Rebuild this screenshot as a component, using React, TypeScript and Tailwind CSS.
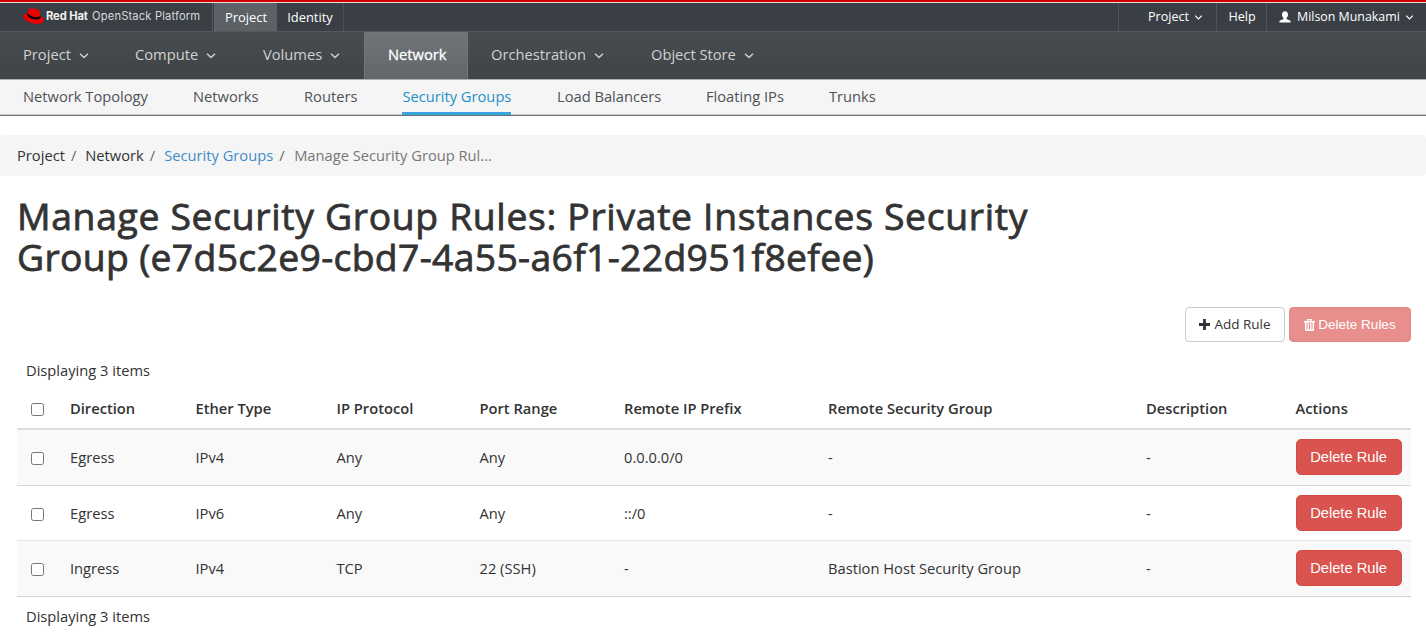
import React from "react";

const Chevron = ({ className = "" }: { className?: string }) => (
  <svg viewBox="0 0 10 6" className={"shrink-0 " + className} fill="none" stroke="currentColor" strokeWidth="1.4">
    <path d="M1 0.8 L5 4.6 L9 0.8" />
  </svg>
);

const Hat = () => (
  <svg viewBox="0 0 192 145" className="h-[16px] w-[21px] shrink-0">
    <path
      fill="#e00"
      d="M127.47 83.49c12.51 0 30.61-2.58 30.61-17.46a14 14 0 0 0-.31-3.42l-7.45-32.36c-1.72-7.12-3.23-10.35-15.73-16.6C124.89 8.69 103.76.5 97.51.5 91.69.5 90 8 83.06 8c-6.68 0-11.64-5.6-17.89-5.6-6 0-9.91 4.09-12.93 12.5 0 0-8.41 23.72-9.49 27.16A6.43 6.43 0 0 0 42.53 44c0 9.22 36.3 39.45 84.94 39.49M160 72.07c1.73 8.19 1.73 9.05 1.73 10.13 0 14-15.74 21.77-36.43 21.77C78.54 104 37.58 76.6 37.58 58.49a18.45 18.45 0 0 1 1.51-7.33C22.27 52 .5 55 .5 74.22c0 31.48 74.59 70.28 133.65 70.28 45.28 0 56.7-20.48 56.7-36.65 0-12.72-11-27.16-30.83-35.78"
    />
    <path
      fill="#150000"
      d="M160 72.07c1.73 8.19 1.73 9.05 1.73 10.13 0 14-15.74 21.77-36.43 21.77C78.54 104 37.58 76.6 37.58 58.49a18.45 18.45 0 0 1 1.51-7.33l3.66-9.06A6.43 6.43 0 0 0 42.53 44c0 9.22 36.3 39.45 84.94 39.45 12.51 0 30.61-2.58 30.61-17.46a14 14 0 0 0-.31-3.42z"
    />
  </svg>
);

const UserIcon = () => (
  <svg viewBox="0 0 12 12" className="h-[12px] w-[12px]" fill="#fff">
    <path d="M6 0.3C7.9 0.3 9 1.6 9 3.6C9 5 8.4 6.3 7.5 7V8L11 9.6Q11.6 9.9 11.6 10.6V11.5H0.4V10.6Q0.4 9.9 1 9.6L4.5 8V7C3.6 6.3 3 5 3 3.6C3 1.6 4.1 0.3 6 0.3Z" />
  </svg>
);

const TrashIcon = () => (
  <svg viewBox="0 0 11 12" className="mr-[3px] h-[12px] w-[11px]" fill="none" stroke="#fff">
    <path d="M0 2.7H11" strokeWidth="1.6" />
    <path d="M3.6 2V0.6H7.4V2" strokeWidth="1.1" />
    <path d="M1.7 3V10.4Q1.7 11.3 2.6 11.3H8.4Q9.3 11.3 9.3 10.4V3" strokeWidth="1.5" />
    <path d="M4.2 3.5V11M6.8 3.5V11" strokeWidth="1.3" />
  </svg>
);

const mainNav = [
  { label: "Project", width: "w-[112px]" },
  { label: "Compute", width: "w-[128px]" },
  { label: "Volumes", width: "w-[124px]" },
  { label: "Network", width: "w-[104px]", active: true },
  { label: "Orchestration", width: "w-[160px]" },
  { label: "Object Store", width: "w-[160px]" },
];

const subNav = [
  { label: "Network Topology", width: "w-[170px]" },
  { label: "Networks", width: "w-[111px]" },
  { label: "Routers", width: "w-[98.4px]" },
  { label: "Security Groups", width: "w-[154.6px]", active: true },
  { label: "Load Balancers", width: "w-[149px]" },
  { label: "Floating IPs", width: "w-[123px]" },
  { label: "Trunks", width: "w-[80px]" },
];

const headers = ["Direction", "Ether Type", "IP Protocol", "Port Range", "Remote IP Prefix", "Remote Security Group", "Description", "Actions"];

const rows = [
  { cells: ["Egress", "IPv4", "Any", "Any", "0.0.0.0/0", "-", "-"], look: "h-[55px] bg-[#f9f9f9] pb-px" },
  { cells: ["Egress", "IPv6", "Any", "Any", "::/0", "-", "-"], look: "h-[55px] border-t border-[#d8d8d8]" },
  { cells: ["Ingress", "IPv4", "TCP", "22 (SSH)", "-", "Bastion Host Security Group", "-"], look: "h-[57px] border-y border-t-[#e6e6e6] border-b-[#d4d4d4] bg-[#f9f9f9] pb-px" },
];

const columns = "grid grid-cols-[44px_125.5px_141px_143px_144.5px_204px_318px_149.5px_124.5px] items-center";

const Checkbox = ({ className = "" }: { className?: string }) => (
  <span className={"ml-[14px] block h-[13px] w-[13px] rounded-[2.5px] border border-[#767676] bg-white " + className} />
);

export default function App() {
  return (
    <div className="h-[635px] w-[1426px] overflow-hidden bg-white font-['Open_Sans',sans-serif] text-[14.7px] leading-[20px] text-[#333]">
      <div className="h-[3px] border-b border-[#f5d9d9] bg-[#c00]" />

      <header className="flex h-[28px] bg-[#393f45] text-[12.9px] text-white">
        <div className="flex w-[213px] items-center border-r border-[#55595d] pb-[2px] pl-[23px]">
          <Hat />
          <div className="ml-[2px] flex items-baseline whitespace-nowrap font-['Inter',sans-serif] text-[11.2px] text-[#d8d8d8]">
            <span className="w-[46px] font-bold tracking-[-0.1px] text-[#f2f2f2]">Red Hat</span>
            <span className="tracking-[0.15px]">OpenStack Platform</span>
          </div>
        </div>
        <div className="ml-px flex w-[63px] items-center justify-center bg-[#5b6165] pb-px pl-px">Project</div>
        <div className="flex w-[67px] items-center justify-center border-r border-[#4c5257] pb-px">Identity</div>
        <div className="ml-auto flex w-[98px] items-center border-l border-[#4f5459] pb-px pl-[29px] text-[12.6px]">
          Project
          <Chevron className="mt-[2px] ml-[5px] h-[5px] w-[9px]" />
        </div>
        <div className="flex w-[50px] items-center justify-center border-l border-[#4f5459] pb-px pl-px text-[12.6px]">Help</div>
        <div className="flex w-[160px] items-center whitespace-nowrap border-l border-[#4f5459] pb-px pl-[12px]">
          <UserIcon />
          <span className="ml-[6px] text-[12.4px]">Milson Munakami</span>
          <Chevron className="mt-[2px] ml-[5px] h-[5px] w-[9px]" />
        </div>
      </header>

      <nav className="flex h-[49px] border-t border-b border-t-[#53595d] border-b-[#aeb1b3] bg-linear-to-b from-[#474c50] to-[#3f4447] text-[#d1d1d1]">
        {mainNav.map((item) => (
          <div
            key={item.label}
            className={
              "flex items-center whitespace-nowrap pb-[3px] pl-[23px] " +
              item.width +
              (item.active ? " border-x border-[#74777a] bg-linear-to-b from-[#71757a] to-[#626669] pl-[22px] text-white [-webkit-text-stroke:0.3px_white]" : "")
            }
          >
            {item.label}
            {!item.active && <Chevron className="mt-[4px] ml-[8px] h-[6px] w-[10px]" />}
          </div>
        ))}
      </nav>

      <nav className="flex h-[36px] border-b border-[#737373] bg-[#f5f5f5] text-[#4d5258]">
        <div className="w-[23px] border-b border-[#ccc]" />
        {subNav.map((item) => (
          <div key={item.label} className={"flex shrink-0 border-b border-[#ccc] " + item.width}>
            <span className={"-mb-px whitespace-nowrap pt-[6px] " + (item.active ? "border-b-3 border-[#39a5dc] text-[#1d8fc8]" : "")}>
              {item.label}
            </span>
          </div>
        ))}
        <div className="grow border-b border-[#ccc]" />
      </nav>

      <div className="mt-[19px] flex h-[41px] items-center rounded-[4px] bg-[#f5f5f5] pb-px pl-[17px]">
        <span>Project</span>
        <span className="w-[20.4px] pl-[6px] text-[#666]">/</span>
        <span>Network</span>
        <span className="w-[20.4px] pl-[6px] text-[#666]">/</span>
        <span className="text-[#428bca]">Security Groups</span>
        <span className="w-[21px] pl-[6px] text-[#666]">/</span>
        <span className="text-[#777]">Manage Security Group Rul...</span>
      </div>

      <main className="pr-[15px] pl-[17px]">
        <h1 className="mt-[19px] w-[1050px] text-[37.3px] leading-[41px] whitespace-nowrap [-webkit-text-stroke:0.8px_#333]">
          <span className="block tracking-[0.67px]">Manage Security Group Rules: Private Instances Security</span>
          <span className="block tracking-[0.34px]">Group (e7d5c2e9-cbd7-4a55-a6f1-22d951f8efee)</span>
        </h1>

        <div className="mt-[30px] flex h-[35px] justify-end gap-[4px] text-[13.5px]">
          <button className="flex w-[100px] items-center justify-center rounded-[4px] border border-[#ccc] bg-white pb-px">
            <svg viewBox="0 0 11 11" className="mr-[4px] h-[11px] w-[11px]" stroke="#333" strokeWidth="2.8">
              <path d="M5.5 0V11M0 5.5H11" />
            </svg>
            Add Rule
          </button>
          <button className="flex w-[122px] items-center justify-center rounded-[4px] border border-[#e58987] bg-[#e88f8d] font-['Liberation_Sans',sans-serif] text-white">
            <TrashIcon />
            Delete Rules
          </button>
        </div>

        <div className="mt-[18px] pl-[9px]">Displaying 3 items</div>

        <div className={columns + " mt-[8px] h-[42px] border-b-2 border-[#ddd] pb-px font-semibold"}>
          <Checkbox className="mt-[4px]" />
          {headers.map((h) => (
            <div key={h} className="whitespace-nowrap pl-[9px]">{h}</div>
          ))}
        </div>
        {rows.map((row, i) => (
          <div key={i} className={columns + " " + row.look}>
            <Checkbox className="mt-[2px]" />
            {row.cells.map((cell, j) => (
              <div key={j} className="whitespace-nowrap pl-[9px]">{cell}</div>
            ))}
            <div className="pl-[9px]">
              <button className="block h-[36px] w-[106px] rounded-[5px] border border-[#d64a45] bg-[#d9534f] font-['Liberation_Sans',sans-serif] text-white">
                Delete Rule
              </button>
            </div>
          </div>
        ))}
        <div className="mt-[9px] pl-[9px]">Displaying 3 items</div>
      </main>
    </div>
  );
}
